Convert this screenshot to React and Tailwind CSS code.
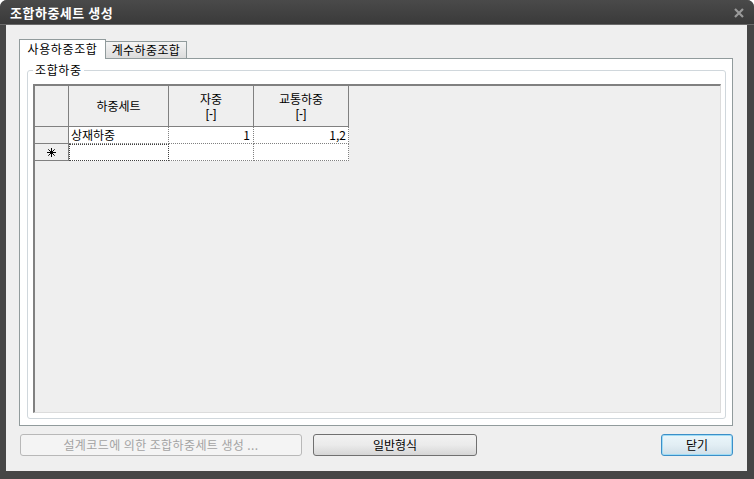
import React from "react";

const font = { fontFamily: '"Noto Sans CJK KR", "Noto Sans", sans-serif' };
const latin = { fontFamily: '"Liberation Sans", Arial, sans-serif' };

function Cell({ className = "", children }) {
  return <div className={"flex items-center " + className}>{children}</div>;
}

export default function App() {
  return (
    <div className="w-[754px] h-[479px] bg-white" style={font}>
      <div className="w-[754px] h-[479px] bg-[#464646] rounded-t-[7px] flex flex-col overflow-hidden">
        {/* Title bar */}
        <div className="h-[24px] shrink-0 flex items-center justify-between pl-[10px] pr-[10px] bg-gradient-to-b from-[#4a4a4a] to-[#3a3a3a]">
          <span className="text-white text-[13px] font-bold leading-none tracking-[0.5px]">조합하중세트 생성</span>
          <svg width="10" height="10" viewBox="0 0 10 10" className="mt-[2px]">
            <path d="M1 1 L9 9 M9 1 L1 9" stroke="#9a9a9a" strokeWidth="2.2" />
          </svg>
        </div>
        <div className="h-px bg-[#6a6a6a] shrink-0" />
        {/* Client */}
        <div className="flex-1 ml-[6px] mr-[7px] mb-[8px] bg-[#efefef] flex flex-col pt-[13px] pl-[13px] pr-[14px]">
          {/* Tabs */}
          <div className="h-[20px] flex items-end shrink-0">
            <div className="h-[20px] w-[87px] bg-white border border-b-0 border-[#919b9c] text-[12px] tracking-[0.6px] leading-none flex items-center justify-center text-black relative z-10 -mb-px pb-px">
              사용하중조합
            </div>
            <div className="h-[17px] w-[81px] bg-gradient-to-b from-[#f4f4f4] to-[#dcdcdc] border border-l-0 border-b-0 border-[#919b9c] text-[12px] tracking-[0.4px] leading-none flex items-center justify-center text-black">
              계수하중조합
            </div>
          </div>
          {/* Panel */}
          <div className="h-[368px] bg-white border border-[#919b9c] shrink-0 pt-[5px] pl-[7px] pr-[6px] pb-[6px] flex flex-col">
            <div className="flex-1 relative border border-[#d0d7dc] rounded-[3px] mt-[6px] pt-[13px] pl-[5px] pr-[4px] pb-[5px] flex flex-col">
              <span className="absolute -top-[9px] left-[5px] bg-white px-[2px] text-[12px] tracking-[0.6px] leading-[16px] text-black">조합하중</span>
              {/* Grid */}
              <div className="flex-1 bg-[#efefef] border-t-2 border-l-2 border-[#808080] border-r border-r-[#dcdcdc] border-b border-b-[#dcdcdc] text-[12px] text-black">
                {/* Header */}
                <div className="flex h-[41px]">
                  <Cell className="w-[34px] border-r border-b border-[#808080] bg-[#efefef]" />
                  <Cell className="w-[100px] border-r border-b border-[#808080] justify-center">하중세트</Cell>
                  <div className="w-[85px] border-r border-b border-[#808080] flex flex-col items-center justify-center">
                    <span className="block leading-[16px]">자중</span>
                    <span className="block leading-[14px]" style={latin}>[-]</span>
                  </div>
                  <div className="w-[95px] border-r border-b border-[#808080] flex flex-col items-center justify-center">
                    <span className="block leading-[16px]">교통하중</span>
                    <span className="block leading-[14px]" style={latin}>[-]</span>
                  </div>
                </div>
                {/* Row 1 */}
                <div className="flex h-[17px] leading-none">
                  <Cell className="w-[34px] border-r border-b border-[#808080] bg-[#efefef]" />
                  <Cell className="w-[100px] bg-white border-r border-b border-dotted border-[#808080] pl-[2px]">상재하중</Cell>
                  <Cell className="w-[85px] bg-white border-r border-b border-dotted border-[#808080] justify-end pr-[3px]">1</Cell>
                  <Cell className="w-[95px] bg-white border-r border-b border-dotted border-[#808080] justify-end pr-[2px]">1,2</Cell>
                </div>
                {/* New row */}
                <div className="flex h-[17px] leading-none">
                  <Cell className="w-[34px] border-r border-b border-[#808080] bg-[#efefef] justify-center">
                    <svg width="9" height="9" viewBox="0 0 9 9">
                      <path d="M4.5 0 V9 M0 4.5 H9 M1.3 1.3 L7.7 7.7 M7.7 1.3 L1.3 7.7" stroke="#000" strokeWidth="1" />
                    </svg>
                  </Cell>
                  <Cell className="w-[100px] bg-white border border-dotted border-[#404040]" />
                  <Cell className="w-[85px] bg-white border-r border-b border-dotted border-[#808080]" />
                  <Cell className="w-[95px] bg-white border-r border-b border-dotted border-[#808080]" />
                </div>
              </div>
            </div>
          </div>
          {/* Buttons */}
          <div className="flex mt-[8px] h-[22px] shrink-0 text-[12px] leading-none">
            <div className="ml-px w-[282px] h-[22px] rounded-[3px] border border-[#b8b8b8] bg-[#f4f4f4] text-[#a3a3a3] tracking-[0.4px] flex items-center justify-center">
              설계코드에 의한 조합하중세트 생성 ...
            </div>
            <div className="ml-[11px] w-[164px] h-[22px] rounded-[3px] border border-[#707070] bg-gradient-to-b from-[#f2f2f2] via-[#ebebeb] to-[#d6d6d6] text-black flex items-center justify-center">
              일반형식
            </div>
            <div className="ml-auto w-[72px] h-[22px] rounded-[3px] border border-[#3c8fc8] bg-gradient-to-b from-[#eaf6fb] via-[#e2eef4] to-[#cfdfe8] text-black flex items-center justify-center shadow-[inset_0_0_0_1px_#9fdcf5]">
              닫기
            </div>
          </div>
        </div>
      </div>
    </div>
  );
}
